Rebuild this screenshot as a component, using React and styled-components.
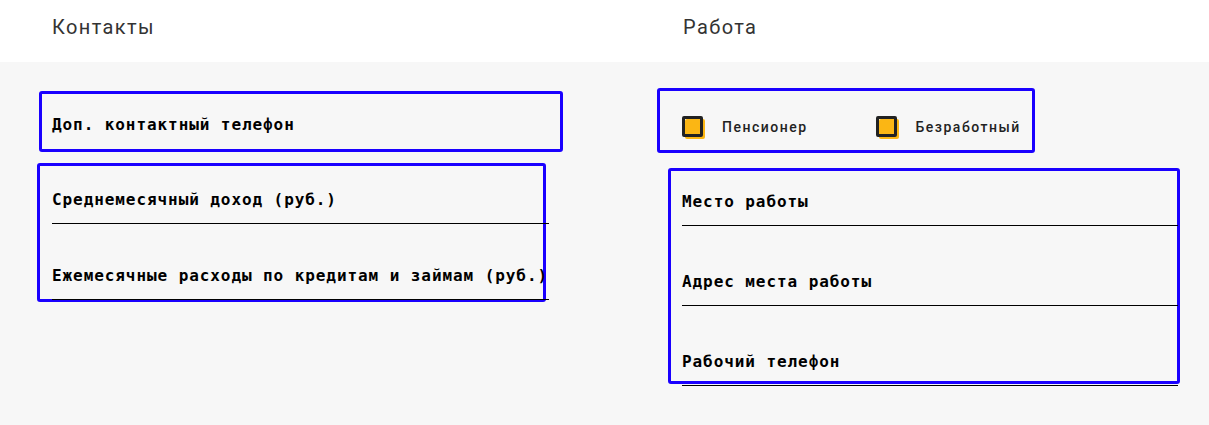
import React from "react";
import styled, { createGlobalStyle } from "styled-components";

const Global = createGlobalStyle`
  html, body { margin: 0; padding: 0; background: #f7f7f7; }
  * { box-sizing: border-box; }
`;

const Page = styled.div`
  width: 1209px;
  min-height: 425px;
  background: #f7f7f7;
`;

const Columns = styled.div`
  display: grid;
  grid-template-columns: 526px 523px;
  column-gap: 94px;
  padding-left: 37px;
`;

const HeaderBar = styled.div`
  background: #ffffff;
  height: 62px;
`;

const Heading = styled.h2`
  margin: 0;
  padding: 14px 0 0 ${(p) => p.$indent}px;
  font-family: Roboto, "Liberation Sans", sans-serif;
  font-weight: 400;
  font-size: 20px;
  line-height: 26px;
  letter-spacing: 1.4px;
  color: #333;
`;

const Column = styled.div`
  display: flex;
  flex-direction: column;
  align-items: flex-start;
`;

const Group = styled.div`
  border: 3px solid #1a00ff;
  border-radius: 3px;
  margin-top: ${(p) => p.$top}px;
  margin-left: ${(p) => p.$left || 0}px;
  width: ${(p) => p.$width}px;
  padding: ${(p) => p.$pad};
`;

const FieldList = styled.div`
  display: flex;
  flex-direction: column;
  gap: ${(p) => p.$gap}px;
  margin-right: ${(p) => p.$overRight}px;
  margin-bottom: ${(p) => p.$overBottom}px;
`;

const Field = styled.div`
  display: flex;
  flex-direction: column;
`;

const Label = styled.label`
  display: block;
  font-family: "DejaVu Sans Mono", "Liberation Mono", monospace;
  font-weight: 700;
  font-size: 16px;
  line-height: 20px;
  letter-spacing: 0.92px;
  color: #000;
  white-space: nowrap;
`;

const Input = styled.div`
  height: 14px;
  border-bottom: 1px solid #000;
`;

const CheckRow = styled.div`
  display: flex;
  align-items: center;
  gap: 68px;
`;

const CheckItem = styled.div`
  display: flex;
  align-items: center;
  gap: 19px;
`;

const Box = styled.span`
  position: relative;
  display: block;
  width: 21px;
  height: 21px;
  &::before {
    content: "";
    position: absolute;
    left: 3px;
    top: 3px;
    width: 20px;
    height: 20px;
    background: #fbb614;
    border-radius: 2px;
  }
  &::after {
    content: "";
    position: absolute;
    inset: 0;
    border: 3px solid #222;
    border-radius: 2px;
  }
`;

const CheckLabel = styled.span`
  font-family: Roboto, "Liberation Sans", sans-serif;
  font-weight: 500;
  font-size: 14px;
  letter-spacing: 1.5px;
  color: #222;
`;

function Check({ label }) {
  return (
    <CheckItem>
      <Box />
      <CheckLabel>{label}</CheckLabel>
    </CheckItem>
  );
}

export default function App() {
  return (
    <Page>
      <Global />
      <HeaderBar>
        <Columns>
          <Heading $indent={15}>Контакты</Heading>
          <Heading $indent={26}>Работа</Heading>
        </Columns>
      </HeaderBar>
      <Columns>
        <Column>
          <Group $top={29} $left={2} $width={524} $pad="21px 0 14px 10px">
            <Label>Доп. контактный телефон</Label>
          </Group>
          <Group $top={11} $width={509} $pad="24px 0 0 12px">
            <FieldList $gap={42} $overRight={-6} $overBottom={-1}>
              <Field>
                <Label>Среднемесячный доход (руб.)</Label>
                <Input />
              </Field>
              <Field>
                <Label>Ежемесячные расходы по кредитам и займам (руб.)</Label>
                <Input />
              </Field>
            </FieldList>
          </Group>
        </Column>
        <Column>
          <Group $top={26} $width={378} $pad="25px 13px 13px 22px">
            <CheckRow>
              <Check label="Пенсионер" />
              <Check label="Безработный" />
            </CheckRow>
          </Group>
          <Group $top={15} $left={11} $width={512} $pad="21px 0 0 11px">
            <FieldList $gap={46} $overRight={-1} $overBottom={-5}>
              <Field>
                <Label>Место работы</Label>
                <Input />
              </Field>
              <Field>
                <Label>Адрес места работы</Label>
                <Input />
              </Field>
              <Field>
                <Label>Рабочий телефон</Label>
                <Input />
              </Field>
            </FieldList>
          </Group>
        </Column>
      </Columns>
    </Page>
  );
}
